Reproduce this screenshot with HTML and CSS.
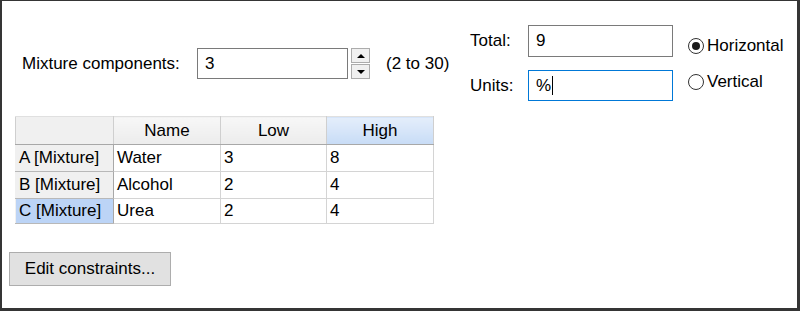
FILE: index.html
```html
<!DOCTYPE html>
<html lang="en">
  <head>
    <meta charset="UTF-8" />
    <meta name="viewport" content="width=device-width, initial-scale=1.0" />
    <title>Mixture components</title>
    <link rel="stylesheet" href="styles.css">
  </head>
  <body>
    <div class="panel">
      <div class="top">
        <div class="components">
          <span class="label">Mixture components:</span>
          <div class="field count">3</div>
          <div class="spinner">
            <span class="spin up"></span>
            <span class="spin down"></span>
          </div>
          <span class="range">(2 to 30)</span>
        </div>
        <div class="totals">
          <span class="label">Total:</span>
          <div class="field">9</div>
          <span class="label">Units:</span>
          <div class="field focused">%<span class="caret"></span></div>
        </div>
        <div class="orient">
          <label class="radio"><span class="dot checked"></span>Horizontal</label>
          <label class="radio"><span class="dot"></span>Vertical</label>
        </div>
      </div>

      <table class="grid">
        <thead>
          <tr>
            <th class="corner"></th>
            <th>Name</th>
            <th>Low</th>
            <th class="selected">High</th>
          </tr>
        </thead>
        <tbody>
          <tr>
            <th class="rowhead">A [Mixture]</th>
            <td>Water</td>
            <td>3</td>
            <td>8</td>
          </tr>
          <tr>
            <th class="rowhead">B [Mixture]</th>
            <td>Alcohol</td>
            <td>2</td>
            <td>4</td>
          </tr>
          <tr class="last">
            <th class="rowhead current">C [Mixture]</th>
            <td>Urea</td>
            <td>2</td>
            <td>4</td>
          </tr>
        </tbody>
      </table>

      <button class="edit">Edit constraints...</button>
    </div>
  </body>
</html>
```

FILE: styles.css
```css
body {
  margin: 0;
  font-family: "Liberation Sans", Arial, sans-serif;
  font-size: 17px;
  color: #000;
  background: #fff;
}
.panel {
  width: 800px;
  height: 311px;
  box-sizing: border-box;
  border-style: solid;
  border-color: #353535;
  border-width: 1px 3px 3px 2px;
}
.top {
  display: grid;
  grid-template-columns: 468px 218px auto;
  padding-top: 24px;
  height: 76px;
}
.components {
  display: flex;
  align-items: center;
  padding-left: 20px;
  margin-top: 23px;
  height: 31px;
}
.components .label {
  flex: 0 0 175px;
}
.field {
  box-sizing: border-box;
  height: 31px;
  border: 1px solid #7a7a7a;
  padding: 0 7px;
  display: flex;
  align-items: center;
  background: #fff;
}
.count {
  width: 151px;
}
.spinner {
  display: flex;
  flex-direction: column;
  gap: 1px;
  margin-left: 3px;
  width: 19px;
  height: 31px;
}
.spin {
  flex: 1;
  background: #f0f0f0;
  border: 1px solid #acacac;
  display: flex;
  align-items: center;
  justify-content: center;
}
.spin::after {
  content: "";
  border-left: 4px solid transparent;
  border-right: 4px solid transparent;
}
.up::after {
  border-bottom: 4px solid #000;
}
.down::after {
  border-top: 4px solid #000;
}
.range {
  margin-left: 16px;
}
.totals {
  display: grid;
  grid-template-columns: 58px 145px;
  grid-template-rows: 32px 31px;
  row-gap: 13px;
  align-items: center;
}
.totals .field {
  height: 100%;
}
.focused {
  border-color: #0078d7;
}
.caret {
  display: inline-block;
  width: 1px;
  height: 19px;
  background: #000;
  margin-left: 1px;
}
.orient {
  display: flex;
  flex-direction: column;
  gap: 20px;
  margin-top: 13px;
}
.radio {
  display: flex;
  align-items: center;
  gap: 3px;
  height: 16px;
}
.dot {
  box-sizing: border-box;
  width: 16px;
  height: 16px;
  border: 1.5px solid #333;
  border-radius: 50%;
  display: flex;
  align-items: center;
  justify-content: center;
}
.dot.checked::after {
  content: "";
  width: 8px;
  height: 8px;
  border-radius: 50%;
  background: #1a1a1a;
}
.grid {
  border-collapse: collapse;
  margin: 15px 0 0 13px;
  border: 1px solid #a8a8a8;
}
.grid th,
.grid td {
  border: 1px solid #d4d4d4;
  padding: 0 3px;
  text-align: left;
  font-weight: normal;
  height: 26px;
}
.grid .last th,
.grid .last td {
  height: 24px;
}
.grid thead th {
  height: 27px;
  text-align: center;
  background: linear-gradient(#f7f7f7, #ececec);
  border-color: #e0e0e0 #cfcfcf #a8a8a8 #cfcfcf;
}
.grid thead th.selected {
  background: linear-gradient(#e4eefb, #c8dcf6);
}
.grid th.corner {
  width: 91px;
  background: #f0f0f0;
}
.grid thead th:nth-child(2) {
  width: 100px;
}
.grid thead th:nth-child(3) {
  width: 99px;
}
.grid thead th:nth-child(4) {
  width: 100px;
}
.grid .rowhead {
  background: #f0f0f0;
  border-color: #fff #a8a8a8 #b8b8b8 #f0f0f0;
  white-space: nowrap;
}
.grid .rowhead.current {
  background: #bcd4f6;
}
.edit {
  margin: 28px 0 0 7px;
  width: 162px;
  height: 34px;
  font-family: inherit;
  font-size: 17px;
  background: #e1e1e1;
  border: 1px solid #adadad;
  padding: 0;
}
```
